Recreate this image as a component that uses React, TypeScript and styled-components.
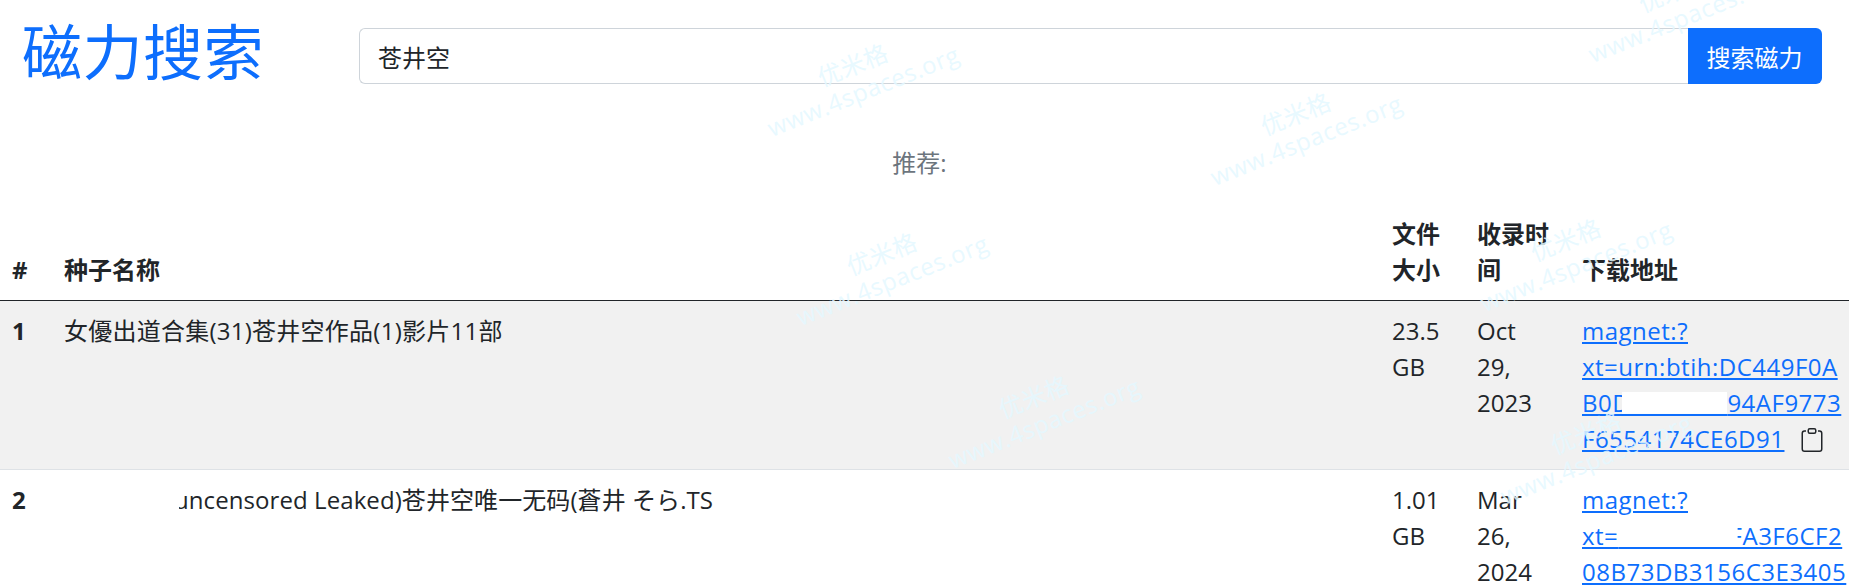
import * as React from "react";
import styled, { createGlobalStyle } from "styled-components";
import { BsClipboard } from "react-icons/bs";

const FONT = `"Open Sans", "Noto Sans CJK SC", sans-serif`;

const GlobalStyle = createGlobalStyle`
    html, body {
        margin: 0;
        padding: 0;
        background: #fff;
        overflow: hidden;
    }
`;

const Page = styled.div`
    position: relative;
    width: 100%;
    height: 588px;
    overflow: hidden;
    color: #212529;
    font-family: ${FONT};
    font-size: 24px;
    line-height: 36px;
`;

const Header = styled.header`
    display: flex;
    align-items: flex-start;
    padding: 16px 27px 0 22px;
`;

const Title = styled.a`
    width: 337px;
    flex: none;
    color: #0d6efd;
    font-size: 60px;
    line-height: 72px;
    letter-spacing: 0.5px;
    text-decoration: none;
`;

const SearchForm = styled.form`
    display: flex;
    flex: 1;
    height: 56px;
    margin-top: 12px;
`;

const SearchInput = styled.input`
    flex: 1;
    min-width: 0;
    box-sizing: border-box;
    padding: 0 18px;
    border: 1px solid #ced4da;
    border-right: none;
    border-radius: 6px 0 0 6px;
    color: #212529;
    font-family: ${FONT};
    font-size: 24px;
    outline: none;
`;

const SearchButton = styled.button`
    width: 134px;
    flex: none;
    padding: 0 1px 0 0;
    border: none;
    border-radius: 0 6px 6px 0;
    background: #0d6efd;
    color: #fff;
    font-family: ${FONT};
    font-size: 24px;
`;

const Recommend = styled.div`
    margin-top: 57px;
    padding-right: 4px;
    color: #6c757d;
    text-align: center;
`;

const Table = styled.table`
    width: 100%;
    margin-top: 23px;
    border-collapse: collapse;
    table-layout: fixed;
`;

const Col = styled.col<{ $width: number }>`
    width: ${(p) => p.$width}px;
`;

const HeadCell = styled.th`
    padding: 12px;
    border-bottom: 1px solid #212529;
    font-weight: 700;
    text-align: left;
    vertical-align: bottom;
`;

const Row = styled.tr<{ $striped?: boolean }>`
    background: ${(p) => (p.$striped ? "#f1f1f1" : "#fff")};
`;

const Cell = styled.td`
    padding: 12px;
    border-bottom: 1px solid #dee2e6;
    vertical-align: top;
    white-space: nowrap;
`;

const IndexCell = styled(Cell)`
    font-weight: 700;
`;

const NameCell = styled(Cell)<{ $spacing: number }>`
    letter-spacing: ${(p) => p.$spacing}px;
`;

// blank patch over the start of the name, it eats the left of the first letter
const NameGap = styled.span`
    display: inline-block;
    position: relative;
    width: 115px;
    height: 20px;
    margin-right: -5px;
    background: #fff;
`;

const MagnetLink = styled.a`
    color: #0d6efd;
    letter-spacing: 0.5px;
    text-decoration: underline;
`;

// painted over part of the hash, the underline stays visible
const Hidden = styled.span<{ $width: number; $before?: number; $after?: number }>`
    position: relative;
    margin-left: ${(p) => -(p.$before ?? 0)}px;
    margin-right: ${(p) => -(p.$after ?? 0)}px;
    letter-spacing: ${(p) => p.$width - 6}px;
    background: linear-gradient(#fff, #fff) center / 100% 66% no-repeat;
    border-radius: 6px;
`;

const CopyIcon = styled(BsClipboard)`
    margin-left: 16px;
    vertical-align: -4px;
    color: #212529;
`;

const WatermarkLayer = styled.div`
    position: absolute;
    inset: 0;
    pointer-events: none;
`;

const Watermark = styled.div<{ $x: number; $y: number }>`
    position: absolute;
    left: ${(p) => p.$x}px;
    top: ${(p) => p.$y}px;
    transform: translate(-50%, -50%) rotate(-21.8deg);
    color: rgba(228, 248, 255, 0.85);
    font-size: 24px;
    line-height: 28px;
    letter-spacing: 0.6px;
    text-align: center;
    white-space: nowrap;
`;

const WATERMARKS = [
    { x: 858, y: 78 },
    { x: 1301, y: 127 },
    { x: 887, y: 267 },
    { x: 1571, y: 253 },
    { x: 1039, y: 410 },
    { x: 1679, y: 4 },
    { x: 1591, y: 446 },
];

export default function App() {
    return (
        <Page>
            <GlobalStyle />
            <Header>
                <Title href="#">磁力搜索</Title>
                <SearchForm>
                    <SearchInput defaultValue="苍井空" />
                    <SearchButton type="button">搜索磁力</SearchButton>
                </SearchForm>
            </Header>
            <Recommend>推荐:{"\u00a0"}</Recommend>
            <Table>
                <colgroup>
                    <Col $width={52} />
                    <Col $width={1328} />
                    <Col $width={85} />
                    <Col $width={105} />
                    <Col $width={279} />
                </colgroup>
                <thead>
                    <tr>
                        <HeadCell>#</HeadCell>
                        <HeadCell>种子名称</HeadCell>
                        <HeadCell>文件大小</HeadCell>
                        <HeadCell>收录时间</HeadCell>
                        <HeadCell>下载地址</HeadCell>
                    </tr>
                </thead>
                <tbody>
                    <Row $striped>
                        <IndexCell>1</IndexCell>
                        <NameCell $spacing={0.25}>女優出道合集(31)苍井空作品(1)影片11部</NameCell>
                        <Cell>23.5<br />GB</Cell>
                        <Cell>Oct<br />29,<br />2023</Cell>
                        <Cell>
                            <MagnetLink href="#">
                                magnet:?<br />
                                xt=urn:btih:DC449F0A<br />
                                B0D<Hidden $width={105} $before={8}>{"\u00a0"}</Hidden>94AF9773<br />
                                F6554174CE6D91
                            </MagnetLink>
                            <CopyIcon size={24} />
                        </Cell>
                    </Row>
                    <Row>
                        <IndexCell>2</IndexCell>
                        <NameCell $spacing={0.08}><NameGap />uncensored Leaked)苍井空唯一无码(蒼井 そら.TS</NameCell>
                        <Cell>1.01<br />GB</Cell>
                        <Cell>Mar<br />26,<br />2024</Cell>
                        <Cell>
                            <MagnetLink href="#">
                                magnet:?<br />
                                xt=<Hidden $width={119} $after={8}>{"\u00a0"}</Hidden>FA3F6CF2<br />
                                08B73DB3156C3E3405
                            </MagnetLink>
                        </Cell>
                    </Row>
                </tbody>
            </Table>
            <WatermarkLayer>
                {WATERMARKS.map((mark) => (
                    <Watermark key={`${mark.x}-${mark.y}`} $x={mark.x} $y={mark.y}>
                        优米格<br />www.4spaces.org
                    </Watermark>
                ))}
            </WatermarkLayer>
        </Page>
    );
}
